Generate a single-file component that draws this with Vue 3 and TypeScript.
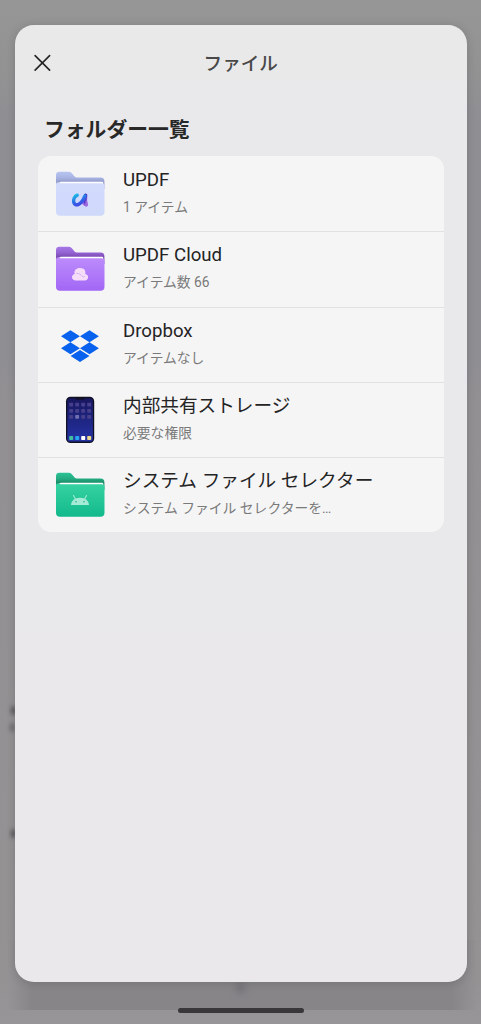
<script setup lang="ts">
type IconKind = 'updf' | 'cloud' | 'dropbox' | 'phone' | 'android'

interface StorageLocation {
  icon: IconKind
  name: string
  detail: string
}

const locations: StorageLocation[] = [
  { icon: 'updf', name: 'UPDF', detail: '1 アイテム' },
  { icon: 'cloud', name: 'UPDF Cloud', detail: 'アイテム数 66' },
  { icon: 'dropbox', name: 'Dropbox', detail: 'アイテムなし' },
  { icon: 'phone', name: '内部共有ストレージ', detail: '必要な権限' },
  { icon: 'android', name: 'システム ファイル セレクター', detail: 'システム ファイル セレクターを…' },
]

const isFolder = (kind: IconKind): boolean => kind === 'updf' || kind === 'cloud' || kind === 'android'
const appColumns = [0, 1, 2, 3]
const appRows = [0, 1, 2]
const dockColors = ['#42bfa0', '#28a5f2', '#ffffff', '#ecd889']
</script>

<template>
  <div class="screen">
    <i class="smudge smudge-a"></i>
    <i class="smudge smudge-b"></i>
    <i class="smudge smudge-c"></i>
    <i class="smudge smudge-d"></i>
    <main class="sheet">
      <header class="bar">
        <button class="close" aria-label="閉じる">
          <svg width="18" height="18" viewBox="0 0 18 18">
            <path d="M2.1 1.6 16.6 16.1M16.6 1.6 2.1 16.1" fill="none" stroke="#252525" stroke-width="1.65" stroke-linecap="round" />
          </svg>
        </button>
        <h1>ファイル</h1>
      </header>
      <h2>フォルダー一覧</h2>
      <ul class="list">
        <li v-for="item in locations" :key="item.icon" class="row">
          <svg class="icon" width="50" height="50" viewBox="0 0 50 50">
            <defs>
              <linearGradient id="back-updf" x1="0" x2="0" y1="0" y2="1"><stop offset="0" stop-color="#b7c4f0" /><stop offset=".35" stop-color="#a9b4e2" /><stop offset=".65" stop-color="#8d96c8" /></linearGradient>
              <linearGradient id="front-updf" x1="0" x2="0" y1="0" y2="1"><stop stop-color="#d3dbfd" /><stop offset="1" stop-color="#cfd9fa" /></linearGradient>
              <linearGradient id="back-cloud" x1="0" x2="0" y1="0" y2="1"><stop offset="0" stop-color="#a777e9" /><stop offset=".35" stop-color="#9462d2" /><stop offset=".65" stop-color="#7545ab" /></linearGradient>
              <linearGradient id="front-cloud" x1="0" x2="0" y1="0" y2="1"><stop stop-color="#bd8cfc" /><stop offset="1" stop-color="#a267f5" /></linearGradient>
              <linearGradient id="back-android" x1="0" x2="0" y1="0" y2="1"><stop offset="0" stop-color="#2ac394" /><stop offset=".35" stop-color="#24ab81" /><stop offset=".65" stop-color="#168460" /></linearGradient>
              <linearGradient id="front-android" x1="0" x2="0" y1="0" y2="1"><stop stop-color="#37d3a2" /><stop offset="1" stop-color="#12b98b" /></linearGradient>
              <linearGradient id="mark-left" x1="0" x2=".5" y1="0" y2="1"><stop stop-color="#1cbce3" /><stop offset=".6" stop-color="#2d6fe8" /><stop offset="1" stop-color="#3f4be6" /></linearGradient>
              <linearGradient id="mark-right" x1="0" x2=".3" y1="0" y2="1"><stop stop-color="#3c3ac8" /><stop offset=".5" stop-color="#583bc9" /><stop offset="1" stop-color="#a06be0" /></linearGradient>
              <linearGradient id="phone-screen" x1="0" x2="0" y1="0" y2="1"><stop stop-color="#18175f" /><stop offset="1" stop-color="#2433a5" /></linearGradient>
            </defs>
            <g v-if="isFolder(item.icon)">
              <path d="M1 6.2Q1 2.8 4.4 2.8H13.5Q15.6 2.8 16.8 4.2L19.6 7.5Q20.5 8.6 22 8.6H45.6Q49.4 8.6 49.4 12.5V20H1Z" :fill="`url(#back-${item.icon})`" />
              <path d="M6 12.7H47Q48.3 12.7 48.3 14V20H4V14.5Q4 12.7 6 12.7Z" fill="#fff" />
              <path d="M1 15.5Q1 12.8 3.7 13.2Q4 14.2 5.5 14.2H46Q49.5 14 49.5 16.8V42.8Q49.5 46.8 45.5 46.8H5Q1 46.8 1 42.8Z" :fill="`url(#front-${item.icon})`" />
            </g>
            <g v-if="item.icon === 'updf'" fill="none" stroke-linecap="round" stroke-linejoin="round">
              <path d="M28.2 33.4C29.4 35.4 31 36.4 31.6 35.6" stroke="#9d68df" stroke-width="3" />
              <path d="M30.6 26.2C30.1 29.2 30.2 32.8 31.3 35.6" stroke="url(#mark-right)" stroke-width="3.6" />
              <path d="M22.2 26.2C19.6 27.4 18 30.6 18.8 33.6C20 37.6 26.4 36.4 29.8 27.2" stroke="url(#mark-left)" stroke-width="3.5" />
            </g>
            <g v-else-if="item.icon === 'cloud'">
              <path d="M20.8 36.4C16.2 36.3 15.8 31 19.6 29.9C18.8 26.3 21.3 24.1 25 24.1C29.4 24.1 31 27 30.2 29.9C34.3 30.5 34 36.3 29.8 36.4Z" fill="#f5ddfa" />
              <path d="M21.3 29.4C24.6 29 25.7 31 27 32.2C28.2 33.2 29.4 33 30 32" fill="none" stroke="#cba1ef" stroke-width=".7" />
            </g>
            <g v-else-if="item.icon === 'android'" fill="#a5ebd6">
              <path d="M16 35C16.3 31 19.5 27.8 25 27.8C30.5 27.8 33.7 31 34 35Z" />
              <path d="m20.4 29-1.9-3.4M29.6 29l1.9-3.4" fill="none" stroke="#a5ebd6" stroke-width="1.1" stroke-linecap="round" />
              <circle cx="21" cy="31.8" r=".8" fill="#2cae88" /><circle cx="29" cy="31.8" r=".8" fill="#2cae88" />
            </g>
            <g v-else-if="item.icon === 'dropbox'" fill="#0862ee">
              <path d="m6 16.2 9.4-6 9.5 6-9.5 6zM25 16.2l9.5-6 9.4 6-9.4 6zM6 28.2l9.4-6 9.5 6-9.5 6zM25 28.2l9.5-6 9.4 6-9.4 6zM15.6 36.1l9.4-6 9.5 6-9.5 6z" />
            </g>
            <g v-else-if="item.icon === 'phone'">
              <rect x="11" y="1.8" width="28.2" height="46.2" rx="4.5" fill="#111023" />
              <rect x="12.3" y="3.2" width="25.6" height="43.4" rx="3.2" fill="url(#phone-screen)" />
              <path d="M20.5 3h9v.7q0 .8-1 .8h-7q-1 0-1-.8z" fill="#111023" />
              <template v-for="y in appRows" :key="y">
                <rect v-for="x in appColumns" :key="x" :x="14.2 + x * 6" :y="7.8 + y * 6.1" width="3.9" height="3.8" rx=".8" :fill="y === 2 && x === 1 ? '#7171b1' : '#463f8c'" />
              </template>
              <rect v-for="(color, index) in dockColors" :key="color" :x="14.2 + index * 6" y="41" width="4" height="4.1" rx=".8" :fill="color" />
            </g>
          </svg>
          <div class="copy">
            <p class="name">{{ item.name }}</p>
            <p class="detail">{{ item.detail }}</p>
          </div>
        </li>
      </ul>
    </main>
    <div class="gesture"></div>
  </div>
</template>

<style>
body { margin: 0; }
</style>

<style scoped>
.screen {
  position: relative;
  box-sizing: border-box;
  width: 481px;
  height: 1024px;
  padding: 25px 14px 0 14.5px;
  overflow: hidden;
  background: linear-gradient(180deg, #969696 0, #929293 75px, #8f8e93 120px, #8f8e93 360px, #929092 400px, #949293 980px, #979597 1024px);
  font-family: Roboto, "Noto Sans CJK JP", sans-serif;
}
.screen::before {
  content: '';
  position: absolute;
  left: 0;
  right: 0;
  top: 940px;
  height: 70px;
  background: linear-gradient(90deg, transparent 8px, #878588 32px, #878588 452px, transparent 477px);
}
.sheet {
  position: relative;
  box-sizing: border-box;
  height: 957px;
  padding: 0 23.5px;
  border-radius: 19px;
  background: linear-gradient(180deg, #e9e9e9 0, #e9e9eb 90px, #e9e8eb 500px, #eae8ea 100%);
  box-shadow: 0 1px 8px rgb(40 40 45 / 20%);
}
.bar {
  display: grid;
  grid-template-columns: 50px 1fr 50px;
  align-items: center;
  height: 75px;
}
.close {
  display: flex;
  width: 18px;
  height: 18px;
  margin-left: -5px;
  padding: 0;
  border: 0;
  background: none;
}
h1, h2, p, ul { margin: 0; padding: 0; }
h1 {
  padding-top: 2px;
  color: #484848;
  font-size: 18.6px;
  font-weight: 500;
  line-height: 28px;
  text-align: center;
}
h2 {
  height: 56px;
  padding: 14px 0 0 6px;
  box-sizing: border-box;
  color: #282828;
  font-size: 20.8px;
  font-weight: 700;
  line-height: 32px;
}
.list {
  border-radius: 13px;
  overflow: hidden;
  list-style: none;
  background: #f5f5f6;
}
.row {
  display: flex;
  align-items: center;
  box-sizing: border-box;
  height: 75.3px;
  padding-left: 17px;
}
.row + .row { border-top: 1px solid #e1e1e3; }
.icon { flex: none; }
.copy { margin-left: 18px; white-space: nowrap; }
.name {
  color: #242424;
  font-size: 18.65px;
  line-height: 28px;
}
.detail {
  margin-top: -1px;
  padding-bottom: 1px;
  color: #7a7a7a;
  font-size: 13.8px;
  line-height: 28px;
}
.gesture {
  position: relative;
  width: 126px;
  height: 5px;
  margin: 26px auto 0;
  border-radius: 3px;
  background: #393739;
}
.smudge {
  position: absolute;
  width: 5px;
  height: 9px;
  border-radius: 50%;
  background: #555457;
  filter: blur(2px);
}
.smudge-a { left: 11px; top: 706px; }
.smudge-b { left: 10px; top: 723px; opacity: .65; }
.smudge-c { left: 11px; top: 829px; }
.smudge-d { left: 235px; top: 982px; width: 11px; height: 12px; background: #77757a; filter: blur(3px); }
</style>
